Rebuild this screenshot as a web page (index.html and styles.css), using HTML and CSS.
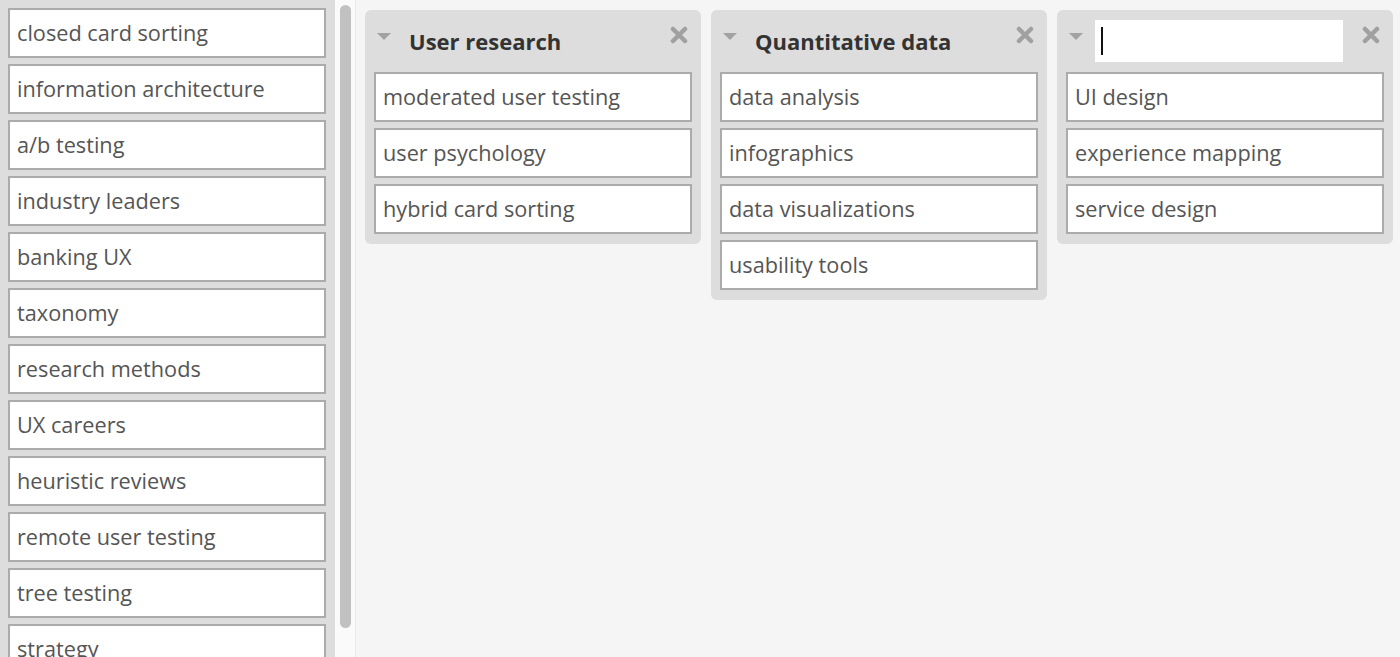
FILE: index.html
```html
<!DOCTYPE html>
<html lang="en">
<head>
<meta charset="utf-8">
<title>Card sort</title>
<link rel="stylesheet" href="styles.css">
</head>
<body>
<div class="app">
  <aside class="sidebar">
    <div class="card">closed card sorting</div>
    <div class="card">information architecture</div>
    <div class="card">a/b testing</div>
    <div class="card">industry leaders</div>
    <div class="card">banking UX</div>
    <div class="card">taxonomy</div>
    <div class="card">research methods</div>
    <div class="card">UX careers</div>
    <div class="card">heuristic reviews</div>
    <div class="card">remote user testing</div>
    <div class="card">tree testing</div>
    <div class="card">strategy</div>
  </aside>
  <div class="scrollbar"><div class="thumb"></div></div>
  <main class="board">
    <section class="column">
      <header class="col-head">
        <span class="caret"></span>
        <h2 class="col-title">User research</h2>
        <svg class="close" viewBox="0 0 18 18" width="18" height="18"><path d="M3 3 L15 15 M15 3 L3 15"/></svg>
      </header>
      <div class="cards">
        <div class="card">moderated user testing</div>
        <div class="card">user psychology</div>
        <div class="card">hybrid card sorting</div>
      </div>
    </section>
    <section class="column">
      <header class="col-head">
        <span class="caret"></span>
        <h2 class="col-title">Quantitative data</h2>
        <svg class="close" viewBox="0 0 18 18" width="18" height="18"><path d="M3 3 L15 15 M15 3 L3 15"/></svg>
      </header>
      <div class="cards">
        <div class="card">data analysis</div>
        <div class="card">infographics</div>
        <div class="card">data visualizations</div>
        <div class="card">usability tools</div>
      </div>
    </section>
    <section class="column">
      <header class="col-head">
        <span class="caret"></span>
        <div class="name-input"><span class="text-caret"></span></div>
        <svg class="close" viewBox="0 0 18 18" width="18" height="18"><path d="M3 3 L15 15 M15 3 L3 15"/></svg>
      </header>
      <div class="cards">
        <div class="card">UI design</div>
        <div class="card">experience mapping</div>
        <div class="card">service design</div>
      </div>
    </section>
  </main>
</div>
</body>
</html>
```

FILE: styles.css
```css
* { box-sizing: border-box; }
html, body { margin: 0; padding: 0; height: 100%; }
body {
  font-family: "Open Sans", "Liberation Sans", sans-serif;
  background: #f5f5f5;
  overflow: hidden;
}
.app {
  display: flex;
  height: 100vh;
}
.sidebar {
  width: 335px;
  flex: none;
  background: #dddddd;
  padding: 8px 9px 0 8px;
  display: flex;
  flex-direction: column;
  gap: 6px;
  overflow: hidden;
}
.scrollbar {
  width: 21px;
  flex: none;
  background: #fafafa;
  border-right: 1px solid #ebebeb;
  padding: 5px 4px 0 5px;
}
.thumb {
  height: 623px;
  border-radius: 6px;
  background: #c1c1c1;
}
.card {
  flex: none;
  height: 50px;
  background: #ffffff;
  border: 2px solid #ababab;
  padding: 0 7px;
  font-size: 21.7px;
  line-height: 45px;
  color: #555555;
  white-space: nowrap;
  overflow: hidden;
}
.board {
  flex: 1;
  display: flex;
  align-items: flex-start;
  gap: 10px;
  padding: 10px 9px;
}
.column {
  width: 336px;
  flex: none;
  background: #dddddd;
  border-radius: 6px;
  padding: 0 9px 10px;
}
.col-head {
  height: 62px;
  display: flex;
  align-items: center;
  padding: 0 4px 0 3px;
}
.caret {
  width: 0;
  height: 0;
  border-left: 7.5px solid transparent;
  border-right: 7.5px solid transparent;
  border-top: 7px solid #a2a2a2;
  margin-top: -10px;
  flex: none;
}
.col-title {
  flex: 1;
  margin: 0 0 0 18px;
  font-size: 22px;
  font-weight: 700;
  color: #333333;
  line-height: 1;
  padding-top: 0;
}
.name-input {
  flex: none;
  width: 248px;
  height: 42px;
  margin-left: 12px;
  background: #ffffff;
  display: flex;
  align-items: center;
  padding-left: 6px;
}
.text-caret {
  width: 2px;
  height: 28px;
  background: #111111;
}
.close {
  flex: none;
  margin-left: auto;
  margin-top: -12px;
  fill: none;
  stroke: #a0a0a0;
  stroke-width: 4.5;
  stroke-linecap: round;
}
.cards {
  display: flex;
  flex-direction: column;
  gap: 6px;
}
```
